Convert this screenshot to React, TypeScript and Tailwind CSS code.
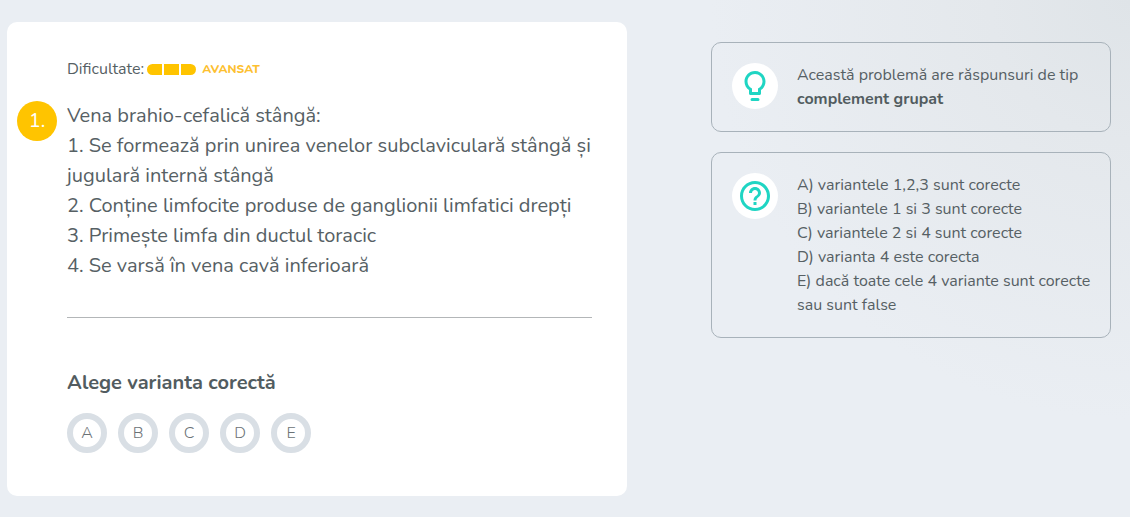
import React, { useState } from "react";
import { MdHelpOutline } from "react-icons/md";

interface InfoCardProps {
  icon: React.ReactNode;
  children: React.ReactNode;
}

const statements = [
  "Vena brahio-cefalică stângă:",
  "1. Se formează prin unirea venelor subclaviculară stângă și jugulară internă stângă",
  "2. Conține limfocite produse de ganglionii limfatici drepți",
  "3. Primește limfa din ductul toracic",
  "4. Se varsă în vena cavă inferioară",
];

const rules = [
  "A) variantele 1,2,3 sunt corecte",
  "B) variantele 1 si 3 sunt corecte",
  "C) variantele 2 si 4 sunt corecte",
  "D) varianta 4 este corecta",
  "E) dacă toate cele 4 variante sunt corecte sau sunt false",
];

const options = ["A", "B", "C", "D", "E"];

function BulbIcon() {
  return (
    <svg viewBox="0 0 24 24" className="size-9" fill="currentColor" aria-hidden="true">
      <path d="M10 20h4a1 1 0 0 1 0 2h-4a1 1 0 0 1 0-2zM12 2C8.14 2 5 5.14 5 9c0 2.38 1.19 4.47 3 5.74V17c0 .55.45 1 1 1h6c.55 0 1-.45 1-1v-2.26c1.81-1.27 3-3.36 3-5.74 0-3.86-3.14-7-7-7zm2.85 11.1l-.85.6V16h-4v-2.3l-.85-.6C7.8 12.16 7 10.63 7 9c0-2.76 2.24-5 5-5s5 2.24 5 5c0 1.63-.8 3.16-2.15 4.1z" />
    </svg>
  );
}

function InfoCard({ icon, children }: InfoCardProps) {
  return (
    <section className="flex items-start gap-[19px] rounded-[10px] border border-[#a8b2ba] py-5 pr-4 pl-5">
      <div className="flex size-[46px] shrink-0 items-center justify-center rounded-full bg-white text-[#1fd5c3]">
        {icon}
      </div>
      <div className="min-w-0 text-base leading-6">{children}</div>
    </section>
  );
}

function Difficulty() {
  return (
    <div className="flex items-center text-base leading-6">
      <span>Dificultate:</span>
      <div className="ml-[3px] flex gap-[2px] overflow-hidden rounded-full" aria-hidden="true">
        <span className="h-[11px] w-[15px] bg-[#ffc400]" />
        <span className="h-[11px] w-[15px] bg-[#ffc400]" />
        <span className="h-[11px] w-[15px] bg-[#ffc400]" />
      </div>
      <span className="ml-[6px] text-xs font-extrabold text-[#fdc02f]">AVANSAT</span>
    </div>
  );
}

export default function App() {
  const [answer, setAnswer] = useState("");

  return (
    <main className="flex min-h-screen items-start gap-[84px] bg-[#eaeef3] bg-[radial-gradient(circle_at_top_right,#dfe4e8_0px,#e4e8ec_140px,#eaeef3_420px)] pt-[22px] pr-[19px] pb-[21px] pl-[7px] font-['Nunito','Lato',sans-serif] text-[#566064]">
      <article className="min-w-0 flex-1 rounded-[10px] bg-white pt-[35px] pr-[35px] pb-[43px] pl-[10px]">
        <div className="pl-[50px]">
          <Difficulty />
        </div>

        {/* Question */}
        <div className="mt-5 flex items-start gap-[10px]">
          <span className="flex size-10 shrink-0 items-center justify-center rounded-full bg-[#ffc400] text-xl text-white">
            1.
          </span>
          <div className="min-w-0 flex-1 border-b border-[#b3b6b8] pb-9 text-xl leading-[30px]">
            {statements.map((line) => (
              <p key={line}>{line}</p>
            ))}
          </div>
        </div>

        {/* Answers */}
        <fieldset className="mt-[50px] pl-[50px]">
          <legend className="text-xl leading-[30px] font-bold text-[#525c60]">Alege varianta corectă</legend>
          <div className="mt-[15px] flex gap-[11px]">
            {options.map((option) => (
              <label
                key={option}
                className="relative flex size-10 cursor-pointer items-center justify-center rounded-full border-[6px] border-[#d9dfe5] text-base font-light text-[#6b7276] has-checked:border-[#ffc400]"
              >
                <input
                  type="radio"
                  name="answer"
                  value={option}
                  checked={answer === option}
                  onChange={() => setAnswer(option)}
                  className="sr-only"
                />
                {option}
              </label>
            ))}
          </div>
        </fieldset>
      </article>

      <aside className="mt-5 flex w-[400px] shrink-0 flex-col gap-5">
        <InfoCard icon={<BulbIcon />}>
          <p>
            Această problemă are răspunsuri de tip{" "}
            <strong className="font-bold text-[#525c60]">complement grupat</strong>
          </p>
        </InfoCard>
        <InfoCard icon={<MdHelpOutline className="size-9" aria-hidden="true" />}>
          {rules.map((rule) => (
            <p key={rule}>{rule}</p>
          ))}
        </InfoCard>
      </aside>
    </main>
  );
}
